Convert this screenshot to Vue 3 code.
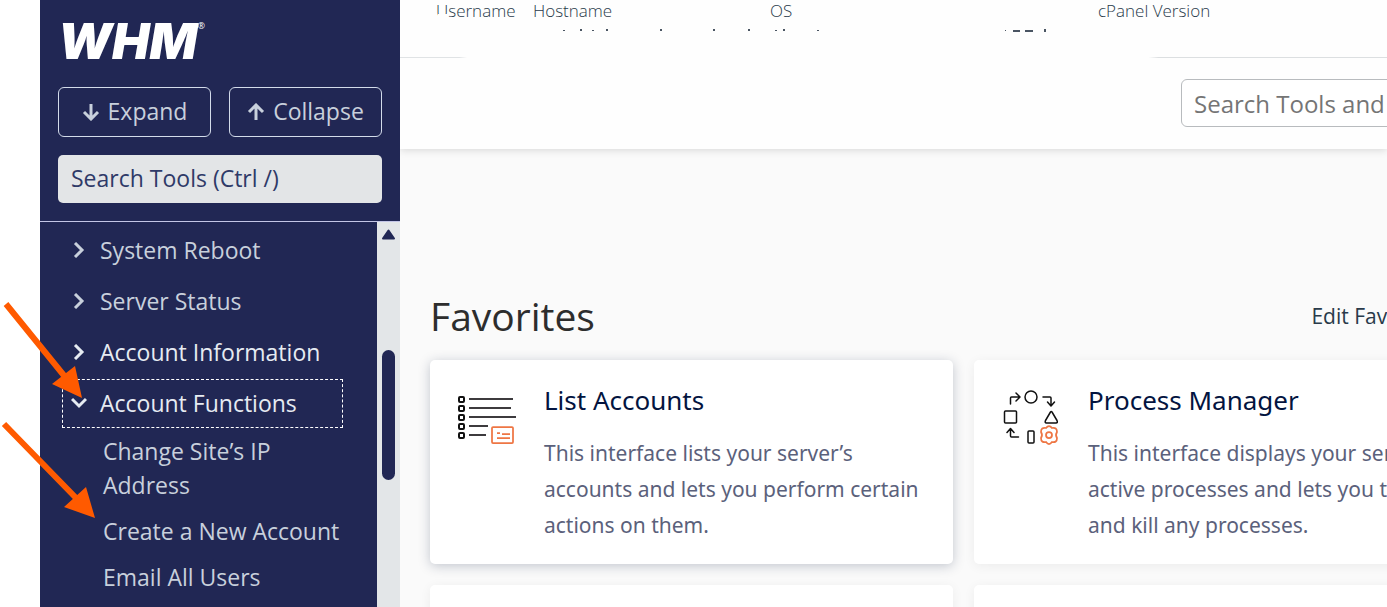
<script setup>
import { ref } from 'vue'

const menu = [
  { label: 'System Reboot' },
  { label: 'Server Status' },
  { label: 'Account Information', bright: true },
  {
    label: 'Account Functions',
    bright: true,
    open: true,
    children: ['Change Site’s IP Address', 'Create a New Account', 'Email All Users'],
  },
]

const cards = [
  {
    title: 'List Accounts',
    icon: 'list',
    raised: true,
    lines: ['This interface lists your server’s', 'accounts and lets you perform certain', 'actions on them.'],
  },
  {
    title: 'Process Manager',
    icon: 'process',
    lines: ['This interface displays your server’s', 'active processes and lets you trace', 'and kill any processes.'],
  },
]

const toolSearch = ref('')
const mainSearch = ref('')

// x, y, width, height of the visible tops of the redacted values
const traces = [
  [563, 30, 2, 1], [580, 29, 2, 2], [592, 30, 2, 1], [606, 29, 2, 2], [660, 29, 2, 2],
  [713, 29, 2, 2], [748, 29, 2, 2], [775, 30, 2, 1], [783, 29, 2, 2], [817, 30, 2, 1],
  [1005, 30, 1, 1], [1013, 30, 7, 2], [1025, 30, 8, 2], [1044, 29, 2, 3],
]
</script>

<template>
  <div class="page">
    <aside class="sidebar">
      <div class="side-head">
        <div class="logo">WHM<sup>®</sup></div>
        <div class="tree-buttons">
          <button type="button">
            <svg width="18" height="18" viewBox="0 0 18 18"><path d="M9 1v15M2 9l7 7 7-7" /></svg>
            Expand
          </button>
          <button type="button">
            <svg width="18" height="18" viewBox="0 0 18 18"><path d="M9 17V2M2 9l7-7 7 7" /></svg>
            Collapse
          </button>
        </div>
        <input v-model="toolSearch" class="tool-search" type="text" placeholder="Search Tools (Ctrl /)" aria-label="Search Tools" />
      </div>
      <div class="side-body">
        <nav class="menu">
          <template v-for="item in menu" :key="item.label">
            <button type="button" class="group" :class="{ bright: item.bright, open: item.open }" :aria-expanded="!!item.open">
              <svg width="16" height="16" viewBox="0 0 16 16">
                <path :d="item.open ? 'M1 4l7 7 7-7' : 'M4 1l7 7-7 7'" />
              </svg>
              {{ item.label }}
            </button>
            <ul v-if="item.open">
              <li v-for="child in item.children" :key="child"><a href="#">{{ child }}</a></li>
            </ul>
          </template>
        </nav>
        <div class="scrollbar" aria-hidden="true">
          <svg width="15" height="11" viewBox="0 0 15 11"><path d="M7.500 1.500L13 9.500H2z" /></svg>
          <div class="thumb"></div>
        </div>
      </div>
    </aside>

    <main class="main">
      <header class="top">
        <div class="info">
          <span class="user">Username</span>
          <span class="host">Hostname</span>
          <span class="os">OS</span>
          <span>cPanel Version</span>
        </div>
        <div class="search-row">
          <input v-model="mainSearch" type="text" placeholder="Search Tools and Accounts" aria-label="Search Tools and Accounts" />
        </div>
      </header>

      <section class="favorites">
        <div class="fav-head">
          <h1>Favorites</h1>
          <a href="#">Edit Favorites</a>
        </div>
        <div class="grid">
          <article v-for="card in cards" :key="card.title" class="card" :class="{ raised: card.raised }">
            <svg v-if="card.icon === 'list'" class="icon" width="60" height="60" viewBox="0 0 60 60">
              <g class="ink thick">
                <rect v-for="y in [9, 18, 27, 36, 45]" :key="y" x="1" :y="y - 2" width="5" height="5" rx="1" />
              </g>
              <path class="rows" d="M11 9h44M11 18h42M11 27h47M11 36h19M11 45h17" />
              <g class="orange">
                <rect x="34" y="37" width="21" height="16" rx="1" />
                <path d="M39 43h3M44 44h8M39 48h13" />
              </g>
            </svg>
            <svg v-else class="icon" width="60" height="60" viewBox="0 0 60 60">
              <g class="ink">
                <circle cx="29" cy="7" r="6" />
                <rect x="2.500" y="21" width="12" height="12" rx="1" />
                <rect x="26" y="41" width="6" height="12" rx="1" />
                <path d="M48.500 22l-5 8.500q-1 2.500 1 2.500h9.500q2 0 1-2.500l-5-8.500q-.75-1-1.500 0z" />
                <path d="M8.500 14V8q0-1 1-1h8M14 3l4 4-4 4" />
                <path d="M41 7h7q1 0 1 1v7M45.500 12l3.500 4 3.500-4" />
                <path d="M8.500 39v7q0 1 1 1h7M5 42.500l3.500-4 3.500 4" />
              </g>
              <g class="orange">
                <circle cx="47" cy="45" r="3" />
                <path d="M44 38q3-4 6 0 5-1 5 4-2 3 0 6 0 5-5 4-3 4-6 0-5 1-5-4 2-3 0-6 0-5 5-4z" />
              </g>
            </svg>
            <div>
              <h2>{{ card.title }}</h2>
              <p><span v-for="line in card.lines" :key="line">{{ line }}</span></p>
            </div>
          </article>
          <article class="card"></article>
          <article class="card"></article>
        </div>
      </section>
    </main>

    <svg class="overlay" width="1060" height="607" viewBox="0 0 1060 607" aria-hidden="true">
      <rect x="438" y="14" width="10" height="4" fill="#fefefe" />
      <rect v-for="(t, i) in traces" :key="i" :x="t[0]" :y="t[1]" :width="t[2]" :height="t[3]" fill="#4a5563" />
      <path d="M6 304L66 378M4 424L78 500" stroke="#ff5a00" stroke-width="6" />
      <path d="M82 398L52 384 75 366zM95 518L64 507 86 487z" fill="#ff5a00" />
    </svg>
  </div>
</template>

<style>
body {
  margin: 0;
  overflow: hidden;
}
</style>

<style scoped>
* {
  box-sizing: border-box;
}
.page {
  position: relative;
  display: flex;
  height: 100vh;
  padding-left: 40px;
  overflow: hidden;
  background: #fff;
  font-family: "Open Sans", "Noto Sans", sans-serif;
}
button,
input {
  font: inherit;
}
a {
  color: inherit;
  text-decoration: none;
}
.sidebar {
  display: flex;
  flex: 0 0 360px;
  flex-direction: column;
  background: #212754;
  color: #c8d0dc;
  font-size: 23px;
}
.side-head {
  flex: none;
  padding: 16px 18px 18px;
  border-bottom: 1px solid #c3c5e6;
}
.logo {
  display: flex;
  height: 53px;
  margin-bottom: 18px;
  color: #fff;
  font: italic 900 50px/50px Inter, sans-serif;
}
.logo sup {
  font: 9px/20px "Open Sans", sans-serif;
}
.tree-buttons {
  display: grid;
  grid-template-columns: 1fr 1fr;
  gap: 18px;
}
.tree-buttons button {
  display: flex;
  align-items: center;
  justify-content: center;
  gap: 8px;
  height: 50px;
  padding: 0 0 2px;
  border: 1px solid #d3dbea;
  border-radius: 6px;
  background: none;
  color: inherit;
}
.tree-buttons svg {
  margin-top: 2px;
}
.tree-buttons path,
.group path {
  fill: none;
  stroke: currentColor;
  stroke-width: 3;
}
.tool-search {
  display: block;
  width: 100%;
  height: 48px;
  margin-top: 18px;
  padding: 0 13px 2px;
  border: 0;
  border-radius: 5px;
  background: #e3e5e7;
  color: #2f3a68;
}
.tool-search::placeholder {
  color: #2f3a68;
  opacity: 1;
}
.side-body {
  display: flex;
  flex: 1;
  min-height: 0;
}
.menu {
  flex: 1;
  padding: 4px 34px 0 22px;
  overflow: hidden;
}
.group {
  display: flex;
  align-items: center;
  gap: 13px;
  width: 100%;
  height: 49px;
  margin-bottom: 2px;
  padding: 0 8px 1px;
  border: 1px dashed transparent;
  background: none;
  color: inherit;
}
.bright {
  color: #e6ebf2;
}
.open {
  border-color: #fff;
}
.menu ul {
  margin: 0;
  padding: 4px 0 0 41px;
  list-style: none;
  line-height: 34px;
}
.menu li {
  margin-bottom: 12px;
}
.scrollbar {
  display: flex;
  flex: 0 0 23px;
  flex-direction: column;
  align-items: center;
  gap: 110px;
  padding-top: 7px;
  background: #e3e6e8;
}
.scrollbar path {
  fill: #212754;
  stroke: #212754;
  stroke-linejoin: round;
  stroke-width: 2;
}
.thumb {
  width: 13px;
  height: 130px;
  border-radius: 7px;
  background: #212754;
}
.main {
  flex: 1;
  min-width: 0;
  overflow: hidden;
  background: #fafafa;
}
.top {
  background: #fefefe;
  box-shadow: 0 1px 8px #00000026;
}
.info {
  display: flex;
  height: 58px;
  padding-left: 36px;
  border-bottom: 1px solid;
  border-image: linear-gradient(90deg, #e0e3e5 60px, #fefefe 68px, #fefefe 748px, #dcdfe1 758px) 1;
  color: #293a4a;
  font-size: 17px;
  font-weight: 300;
  line-height: 22px;
}
.info span {
  flex: none;
}
.user {
  width: 97px;
}
.host {
  width: 237px;
}
.os {
  width: 328px;
}
.search-row {
  display: flex;
  justify-content: flex-end;
  height: 91px;
  padding-top: 21px;
}
.search-row input {
  width: 360px;
  height: 48px;
  margin-right: -154px;
  padding: 0 12px;
  border: 1px solid #b8bbbe;
  border-radius: 6px;
  background: #fff;
  font-size: 24px;
}
.search-row input::placeholder {
  color: #757575;
}
.favorites {
  padding: 140px 0 0 30px;
}
.fav-head {
  display: flex;
  align-items: center;
  justify-content: space-between;
  height: 54px;
  margin-right: -56px;
  color: #2d2d2d;
}
.fav-head h1 {
  margin: 0;
  font-size: 39px;
  font-weight: 400;
  line-height: 52px;
}
.fav-head a {
  color: #293a4a;
  font-size: 21px;
}
.grid {
  display: grid;
  grid-template-columns: 1fr 1fr;
  gap: 21px;
  margin: 17px -110px 0 0;
  font-family: "Noto Sans", sans-serif;
}
.card {
  display: flex;
  gap: 26px;
  height: 204px;
  padding: 22px 0 0 28px;
  border-radius: 5px;
  background: #fff;
  box-shadow: 0 2px 12px #0000000f;
  white-space: nowrap;
}
.raised {
  box-shadow: 0 2px 12px #1d2b4a40;
}
.icon {
  flex: none;
  margin-top: 8px;
}
.icon * {
  fill: none;
}
.ink,
.rows {
  stroke: #111;
  stroke-linecap: round;
  stroke-linejoin: round;
  stroke-width: 1.5;
}
.thick {
  stroke-width: 2;
}
.rows {
  stroke: #3d3b3e;
  stroke-linecap: butt;
  stroke-width: 2;
}
.orange {
  stroke: #ee7644;
  stroke-width: 1.75;
}
.card h2 {
  margin: 0;
  color: #03143f;
  font-size: 26px;
  font-weight: 400;
  line-height: 36px;
}
.card p {
  margin: 17px 0 0;
  color: #5b617b;
  font-size: 21px;
  line-height: 36px;
}
.card p span {
  display: block;
}
.overlay {
  position: absolute;
  top: 0;
  left: 0;
  pointer-events: none;
}
</style>
